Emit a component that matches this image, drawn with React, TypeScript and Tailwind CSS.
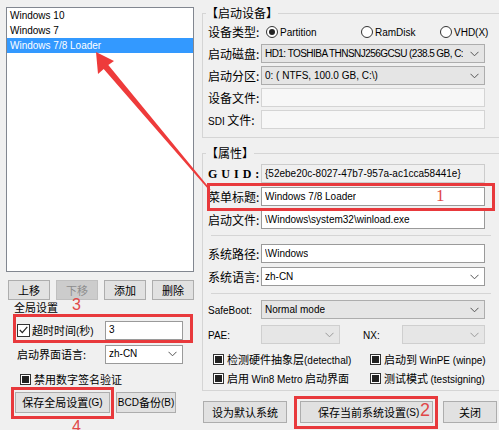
import React from "react"

const ui = "font-['Noto_Sans_CJK_SC','Noto_Sans',sans-serif]"
const lat = "font-['Liberation_Sans',sans-serif] text-[10px]"

function L({ children }: { children: React.ReactNode }) {
    return <span className={lat}>{children}</span>
}

function Chevron({ muted = false }: { muted?: boolean }) {
    return (
        <svg width="9" height="6" viewBox="0 0 9 6" className="shrink-0">
            <path d="M0.5 0.8 L4.5 4.8 L8.5 0.8" fill="none" stroke={muted ? "#9a9a9a" : "#555"} strokeWidth="1" />
        </svg>
    )
}

function Select({
    value,
    className = "",
    textClass = "",
    white = false,
    muted = false,
}: {
    value?: string
    className?: string
    textClass?: string
    white?: boolean
    muted?: boolean
}) {
    return (
        <div
            className={`h-[19px] flex items-center justify-between pl-[3px] pr-[5px] border ${
                white ? "bg-white border-[#9a9a9a]" : muted ? "bg-[#e6e6e6] border-[#cfcfcf]" : "bg-[#e5e5e5] border-[#adadad]"
            } ${className}`}
        >
            <span className={`truncate whitespace-nowrap leading-none ${lat} ${textClass}`}>{value}</span>
            <Chevron muted={muted} />
        </div>
    )
}

function Input({ value, className = "", variant = "normal" }: { value?: string; className?: string; variant?: "normal" | "disabled" | "readonly" }) {
    const look =
        variant === "normal"
            ? "bg-white border-[#9a9a9a]"
            : variant === "readonly"
              ? "bg-[#f0f0f0] border-[#cccccc]"
              : "bg-[#f7f7f7] border-[#d4d4d4]"
    return (
        <div className={`h-[19px] flex items-center pl-[3px] border ${look} ${className}`}>
            <span className={`truncate whitespace-nowrap leading-none ${lat}`}>{value}</span>
        </div>
    )
}

function Btn({ children, className = "", disabled = false }: { children: React.ReactNode; className?: string; disabled?: boolean }) {
    return (
        <div
            className={`flex items-center justify-center whitespace-nowrap border ${
                disabled ? "bg-[#cccccc] border-[#bfbfbf] text-[#8d8d8d]" : "bg-[#e1e1e1] border-[#adadad]"
            } ${className}`}
        >
            {children}
        </div>
    )
}

function Mixed() {
    return (
        <span className="w-[11px] h-[11px] border border-[#333] bg-white flex items-center justify-center shrink-0">
            <span className="w-[7px] h-[7px] bg-[#222]" />
        </span>
    )
}

function Radio({ label, checked = false, className = "" }: { label: string; checked?: boolean; className?: string }) {
    return (
        <div className={`flex items-center gap-[2px] ${className}`}>
            <span className="w-[12px] h-[12px] rounded-full border border-[#333] bg-white flex items-center justify-center">
                {checked && <span className="w-[6px] h-[6px] rounded-full bg-[#222]" />}
            </span>
            <L>{label}</L>
        </div>
    )
}

function Row({ label, children, labelClass = "" }: { label: React.ReactNode; children: React.ReactNode; labelClass?: string }) {
    return (
        <div className="flex items-center">
            <div className={`w-[58px] pl-[5px] shrink-0 whitespace-nowrap ${labelClass}`}>{label}</div>
            {children}
        </div>
    )
}

export default function App() {
    return (
        <div className={`relative w-[499px] h-[430px] overflow-hidden bg-[#f0f0f0] text-[11px] text-black flex ${ui}`}>
            {/* left pane */}
            <div className="w-[200px] shrink-0 flex flex-col pt-[7px]">
                <div className="ml-[6px] w-[188px] h-[265px] border border-[#828790] bg-white font-['Liberation_Sans',sans-serif] text-[10px]">
                    <div className="h-[15px] leading-[15px] pl-[3px]">Windows 10</div>
                    <div className="h-[15px] leading-[15px] pl-[3px]">Windows 7</div>
                    <div className="h-[15px] leading-[15px] pl-[3px] bg-[#3399ff] text-white">Windows 7/8 Loader</div>
                </div>

                <div className="flex gap-[6px] ml-[8px] mt-[8px]">
                    <Btn className="w-[42px] h-[20px]">上移</Btn>
                    <Btn className="w-[42px] h-[20px]" disabled>下移</Btn>
                    <Btn className="w-[42px] h-[20px]">添加</Btn>
                    <Btn className="w-[42px] h-[20px]">删除</Btn>
                </div>

                <div className="ml-[14px] mt-[1px] h-[13px] leading-[13px]">全局设置</div>

                <div className="flex items-center h-[20px] mt-[6px] ml-[17px]">
                    <span className="w-[13px] h-[13px] border border-[#333] bg-white flex items-center justify-center shrink-0">
                        <svg width="9" height="8" viewBox="0 0 9 8">
                            <path d="M0.8 4 L3.3 6.6 L8.3 0.8" fill="none" stroke="#222" strokeWidth="1.2" />
                        </svg>
                    </span>
                    <span className="ml-[2px] w-[73px] whitespace-nowrap">
                        超时时间<L>(</L>秒<L>)</L>
                    </span>
                    <Input value="3" className="w-[78px] h-[18px]" />
                </div>

                <div className="flex items-center h-[18px] mt-[5px] ml-[17px]">
                    <span className="w-[88px]">启动界面语言:</span>
                    <Select value="zh-CN" white className="w-[78px] h-[18px]" />
                </div>

                <div className="flex items-center gap-[3px] h-[16px] mt-[8px] ml-[20px]">
                    <Mixed />
                    <span>禁用数字签名验证</span>
                </div>

                <div className="flex gap-[6px] mt-[5px] ml-[15px]">
                    <Btn className="w-[95px] h-[21px]">
                        保存全局设置<L>(G)</L>
                    </Btn>
                    <Btn className="w-[60px] h-[21px]">
                        <L>BCD</L>备份<L>(B)</L>
                    </Btn>
                </div>
            </div>

            {/* right pane */}
            <div className="flex-1 flex flex-col pl-[2px]">
                <fieldset className="mt-[6px] w-[300px] border border-[#d5d5d5] pb-[8px]">
                    <legend className="ml-[3px] h-[14px] leading-[14px] text-[12px]">【启动设备】</legend>
                    <div className="flex flex-col gap-[3px] pt-[3px]">
                        <div className="flex items-center h-[18px]">
                            <div className="w-[63px] pl-[5px] shrink-0 text-[12px]">设备类型:</div>
                            <Radio label="Partition" checked className="w-[95px]" />
                            <Radio label="RamDisk" className="w-[79px]" />
                            <Radio label="VHD(X)" />
                        </div>
                        <Row label="启动磁盘:" labelClass="text-[12px]">
                            <Select
                                value="HD1: TOSHIBA THNSNJ256GCSU (238.5 GB, C:"
                                textClass="tracking-[-0.55px]"
                                className="w-[224px]"
                            />
                        </Row>
                        <Row label="启动分区:" labelClass="text-[12px]">
                            <Select value="0: ( NTFS, 100.0 GB, C:\)" className="w-[224px]" />
                        </Row>
                        <Row label="设备文件:" labelClass="text-[12px]">
                            <Input variant="disabled" className="w-[224px]" />
                        </Row>
                        <Row
                            labelClass="text-[12px]"
                            label={
                                <>
                                    <L>SDI</L> 文件:
                                </>
                            }
                        >
                            <Input variant="disabled" className="w-[224px]" />
                        </Row>
                    </div>
                </fieldset>

                <fieldset className="mt-[8px] w-[300px] border border-[#d5d5d5] pb-[4px]">
                    <legend className="ml-[3px] h-[14px] leading-[14px] text-[12px]">【属性】</legend>
                    <div className="flex flex-col pt-[4px]">
                        <Row label="GUID:" labelClass="font-['Liberation_Serif',serif] font-bold text-[12px] tracking-[4px]">
                            <Input variant="readonly" value="{52ebe20c-8027-47b7-957a-ac1cca58441e}" className="w-[224px]" />
                        </Row>
                        <div className="mt-[4px]">
                            <Row label="菜单标题:" labelClass="text-[12px]">
                                <Input value="Windows 7/8 Loader" className="w-[224px]" />
                            </Row>
                        </div>
                        <div className="mt-[4px]">
                            <Row label="启动文件:" labelClass="text-[12px]">
                                <Input value="\Windows\system32\winload.exe" className="w-[224px]" />
                            </Row>
                        </div>
                        <div className="ml-[8px] mt-[6px] w-[280px] h-[1px] bg-[#d5d5d5]" />
                        <div className="mt-[8px]">
                            <Row label="系统路径:" labelClass="text-[12px]">
                                <Input value="\Windows" className="w-[224px]" />
                            </Row>
                        </div>
                        <div className="mt-[4px]">
                            <Row label="系统语言:" labelClass="text-[12px]">
                                <Select value="zh-CN" white className="w-[224px]" />
                            </Row>
                        </div>
                        <div className="ml-[8px] mt-[7px] w-[280px] h-[1px] bg-[#d5d5d5]" />
                        <div className="mt-[6px]">
                            <Row label={<L>SafeBoot:</L>}>
                                <Select value="Normal mode" className="w-[224px]" />
                            </Row>
                        </div>
                        <div className="mt-[6px] flex items-center">
                            <div className="w-[58px] pl-[5px]">
                                <L>PAE:</L>
                            </div>
                            <Select muted className="w-[79px]" />
                            <div className="w-[62px] pl-[23px]">
                                <L>NX:</L>
                            </div>
                            <Select muted className="w-[83px]" />
                        </div>
                        <div className="mt-[7px] flex flex-col gap-[3px] pl-[10px]">
                            <div className="flex items-center h-[16px]">
                                <div className="w-[157px] flex items-center gap-[3px]">
                                    <Mixed />
                                    <span className="whitespace-nowrap">
                                        检测硬件抽象层<L>(detecthal)</L>
                                    </span>
                                </div>
                                <div className="flex items-center gap-[3px]">
                                    <Mixed />
                                    <span className="whitespace-nowrap">
                                        启动到 <L>WinPE (winpe)</L>
                                    </span>
                                </div>
                            </div>
                            <div className="flex items-center h-[16px]">
                                <div className="w-[157px] flex items-center gap-[3px]">
                                    <Mixed />
                                    <span className="whitespace-nowrap">
                                        启用 <L>Win8 Metro</L> 启动界面
                                    </span>
                                </div>
                                <div className="flex items-center gap-[3px]">
                                    <Mixed />
                                    <span className="whitespace-nowrap">
                                        测试模式 <L>(testsigning)</L>
                                    </span>
                                </div>
                            </div>
                        </div>
                    </div>
                </fieldset>

                <div className="flex mt-[10px] ml-[1px]">
                    <Btn className="w-[84px] h-[22px]">设为默认系统</Btn>
                    <Btn className="ml-[13px] w-[133px] h-[22px] justify-start pl-[17px]">
                        保存当前系统设置<L>(S)</L>
                    </Btn>
                    <Btn className="ml-[10px] w-[54px] h-[22px]">关闭</Btn>
                </div>
            </div>

            {/* annotations */}
            <svg className="absolute inset-0 pointer-events-none" width="499" height="430" viewBox="0 0 499 430">
                <polygon
                    points="96,52 114,61 108.3,65.1 210.6,189.5 209.4,190.5 103.7,68.9 98,74"
                    fill="#ee3b3b"
                />
            </svg>
            <div className="absolute left-[207px] top-[183px] w-[288px] h-[28px] border-[3px] border-[#e8393c]" />
            <div className="absolute left-[294px] top-[396px] w-[144px] h-[33px] border-[3px] border-[#e8393c]" />
            <div className="absolute left-[13px] top-[314px] w-[180px] h-[29px] border-[3px] border-[#e8393c]" />
            <div className="absolute left-[11px] top-[387px] w-[103px] h-[32px] border-[3px] border-[#e8393c]" />
            <span className="absolute left-[436px] top-[187px] text-[17px] leading-none text-[#e04848] font-['Liberation_Serif',serif]">1</span>
            <span className="absolute left-[420px] top-[401px] text-[18px] leading-none text-[#e04848] font-['Liberation_Sans',sans-serif]">2</span>
            <span className="absolute left-[72px] top-[297px] text-[16px] leading-none text-[#e04848] font-['Liberation_Sans',sans-serif]">3</span>
            <span className="absolute left-[72px] top-[419px] text-[16px] leading-none text-[#e04848] font-['Liberation_Sans',sans-serif]">4</span>
        </div>
    )
}
